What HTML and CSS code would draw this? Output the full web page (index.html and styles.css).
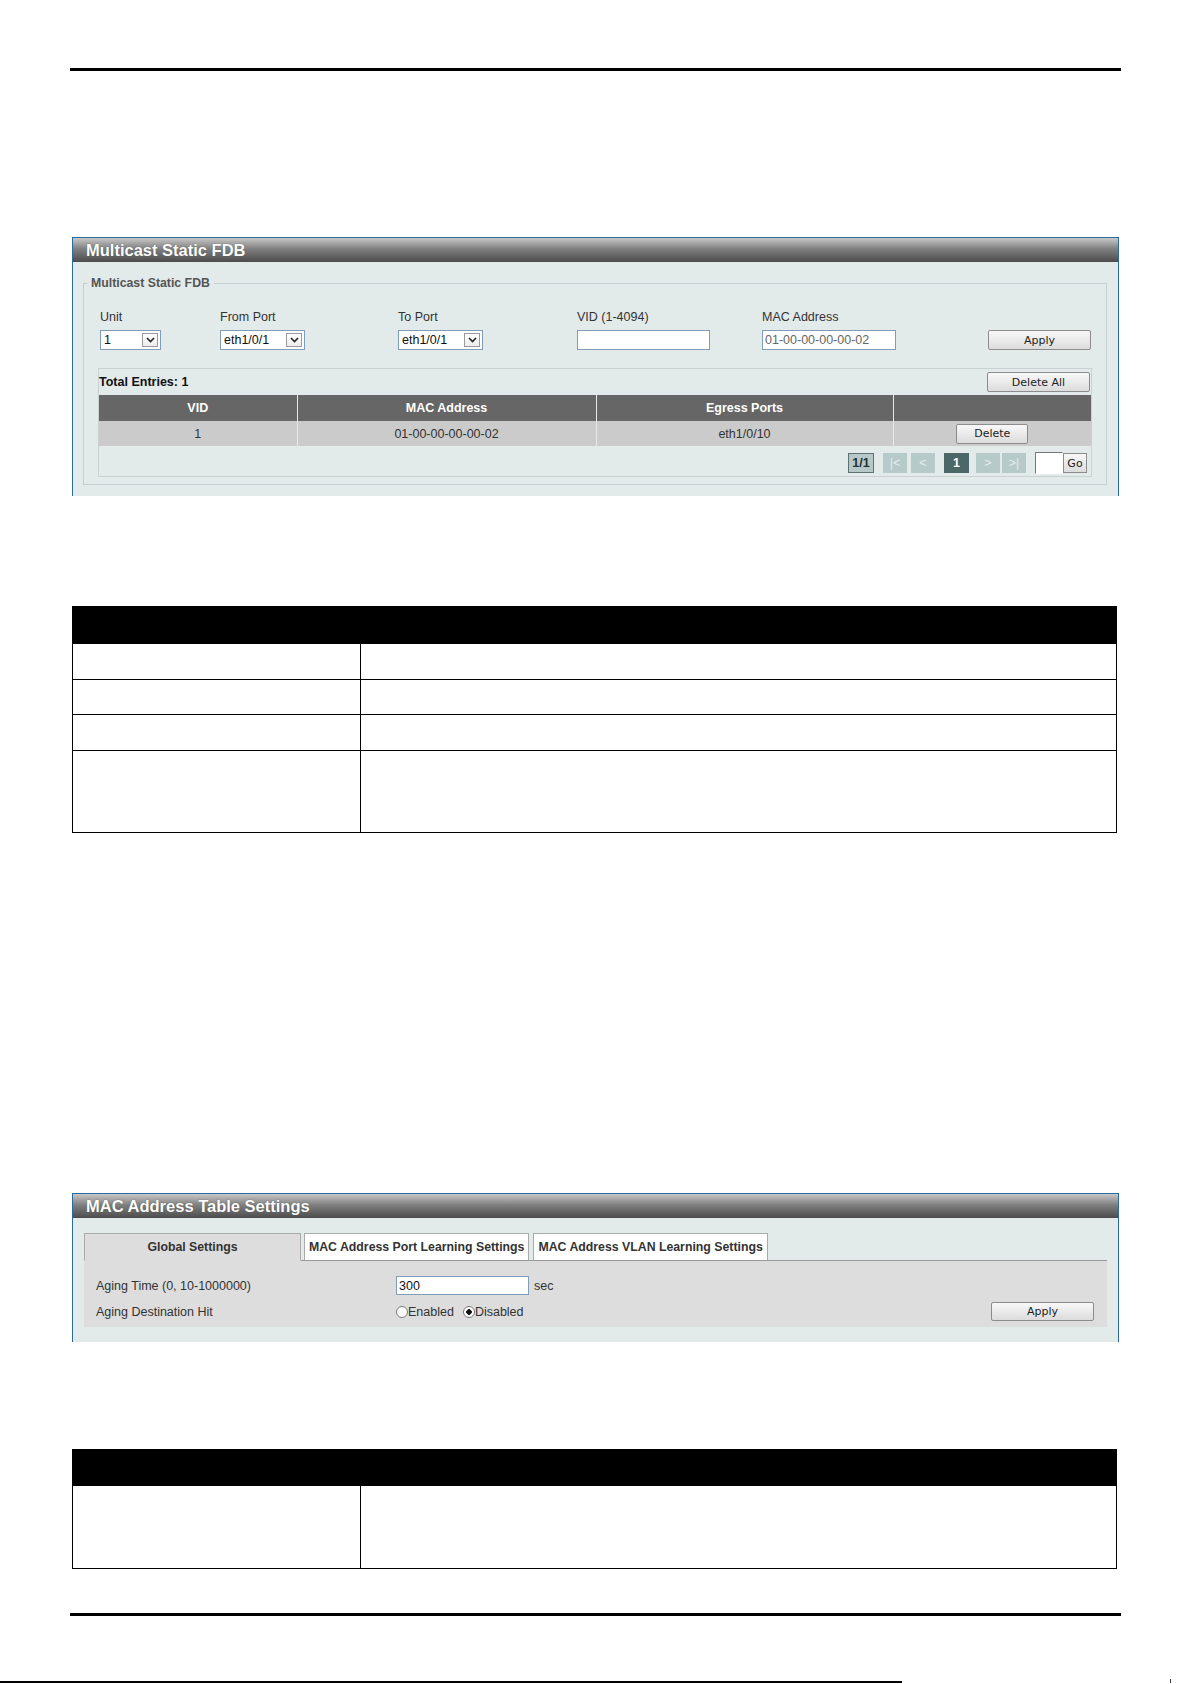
FILE: index.html
```html
<!DOCTYPE html>
<html lang="en">
<head>
    <meta charset="UTF-8">
    <meta name="viewport" content="width=device-width, initial-scale=1.0">
    <title>Multicast Static FDB</title>
    <link rel="stylesheet" href="styles.css">
</head>
<body>
    <div class="page">
        <div class="rule"></div>

        <div class="panel panel-fdb">
            <div class="panel-title">Multicast Static FDB</div>
            <fieldset class="group">
                <legend>Multicast Static FDB</legend>
                <div class="fields">
                    <label>Unit</label>
                    <label>From Port</label>
                    <label>To Port</label>
                    <label>VID (1-4094)</label>
                    <label>MAC Address</label>
                    <span></span>

                    <div class="select w-unit">
                        <span>1</span>
                        <span class="arrow"><svg width="9" height="6" viewBox="0 0 9 6"><path d="M1 1l3.5 3.5L8 1" fill="none" stroke="#222" stroke-width="1.6"/></svg></span>
                    </div>
                    <div class="select w-port">
                        <span>eth1/0/1</span>
                        <span class="arrow"><svg width="9" height="6" viewBox="0 0 9 6"><path d="M1 1l3.5 3.5L8 1" fill="none" stroke="#222" stroke-width="1.6"/></svg></span>
                    </div>
                    <div class="select w-port">
                        <span>eth1/0/1</span>
                        <span class="arrow"><svg width="9" height="6" viewBox="0 0 9 6"><path d="M1 1l3.5 3.5L8 1" fill="none" stroke="#222" stroke-width="1.6"/></svg></span>
                    </div>
                    <input type="text" class="text w-vid" value="">
                    <input type="text" class="text w-mac hint" value="01-00-00-00-00-02">
                    <button class="btn apply">Apply</button>
                </div>

                <div class="entries-box">
                    <div class="entries-top">
                        <span class="total">Total Entries: 1</span>
                        <button class="btn delete-all">Delete All</button>
                    </div>
                    <table class="entries">
                        <tr>
                            <th class="c1">VID</th>
                            <th class="c2">MAC Address</th>
                            <th class="c3">Egress Ports</th>
                            <th class="c4"></th>
                        </tr>
                        <tr>
                            <td>1</td>
                            <td>01-00-00-00-00-02</td>
                            <td>eth1/0/10</td>
                            <td><button class="btn delete">Delete</button></td>
                        </tr>
                    </table>
                    <div class="pager">
                        <span class="pg count">1/1</span>
                        <span class="pg off sp9">|&lt;</span>
                        <span class="pg off sp4">&lt;</span>
                        <span class="pg cur sp9">1</span>
                        <span class="pg off sp7">&gt;</span>
                        <span class="pg off sp2">&gt;|</span>
                        <input type="text" class="pg-input sp9">
                        <button class="btn go">Go</button>
                    </div>
                </div>
            </fieldset>
        </div>

        <table class="doc doc-first">
            <tr><th></th><th></th></tr>
            <tr class="h36"><td class="key"></td><td></td></tr>
            <tr class="h35"><td class="key"></td><td></td></tr>
            <tr class="h36"><td class="key"></td><td></td></tr>
            <tr class="h82"><td class="key"></td><td></td></tr>
        </table>

        <div class="panel panel-mac">
            <div class="panel-title">MAC Address Table Settings</div>
            <div class="tabs">
                <div class="tab active">Global Settings</div>
                <div class="tab tab-port">MAC Address Port Learning Settings</div>
                <div class="tab tab-vlan">MAC Address VLAN Learning Settings</div>
            </div>
            <div class="tab-body">
                <div class="row">
                    <span class="row-label">Aging Time (0, 10-1000000)</span>
                    <input type="text" class="text w-aging" value="300">
                    <span class="unit">sec</span>
                </div>
                <div class="row">
                    <span class="row-label">Aging Destination Hit</span>
                    <span class="radio"></span><span>Enabled</span>
                    <span class="radio checked"></span><span>Disabled</span>
                    <button class="btn apply apply-mac">Apply</button>
                </div>
            </div>
        </div>

        <table class="doc doc-second">
            <tr><th class="short"></th><th class="short"></th></tr>
            <tr class="h83"><td class="key"></td><td></td></tr>
        </table>

        <div class="rule rule-bottom"></div>

        <div class="foot">
            <div class="foot-line"></div>
            <div class="foot-mark"></div>
        </div>
    </div>
</body>
</html>
```

FILE: styles.css
```css
* {
    box-sizing: border-box;
}
body {
    margin: 0;
    background: #fff;
    font-family: "Liberation Sans", Arial, sans-serif;
    font-size: 12.5px;
    color: #333;
}
.page {
    width: 1192px;
    padding-top: 68px;
}
.rule {
    margin-left: 70px;
    width: 1051px;
    height: 3px;
    background: #000;
}

/* switch web UI panels */
.panel {
    margin-left: 72px;
    width: 1047px;
    border: 1px solid #2b6a9c;
    border-bottom: none;
    background: #e3eaea;
    overflow: hidden;
}
.panel-fdb {
    margin-top: 166px;
    height: 259px;
}
.panel-mac {
    margin-top: 360px;
    height: 149px;
}
.panel-title {
    height: 24px;
    line-height: 24px;
    padding-left: 13px;
    background: linear-gradient(#c8c8c8, #808080 45%, #4c4c4c);
    color: #fff;
    font-size: 16.5px;
    font-weight: bold;
    text-shadow: 0 0 1px #444;
}

.group {
    margin: 14px 11px 0 10px;
    padding: 0 15px 7px 16px;
    border: 1px solid #c6cfcf;
    min-width: 0;
}
.group legend {
    margin-left: -13px;
    padding: 0 4px;
    line-height: 14px;
    font-size: 12.3px;
    font-weight: bold;
    color: #555;
}
.fields {
    display: grid;
    grid-template-columns: 120px 178px 179px 185px 1fr auto;
    grid-template-rows: 15px 20px;
    row-gap: 5px;
    margin-top: 20px;
    align-items: center;
}
.fields label {
    line-height: 15px;
}

.select {
    display: flex;
    align-items: center;
    justify-content: space-between;
    height: 20px;
    padding-left: 3px;
    border: 1px solid #7f9db9;
    background: #fff;
    color: #111;
}
.w-unit {
    width: 61px;
}
.w-port {
    width: 85px;
}
.arrow {
    display: flex;
    align-items: center;
    justify-content: center;
    width: 16px;
    height: 14px;
    margin-right: 2px;
    border: 1px solid #9a9a9a;
    background: linear-gradient(#fff, #ececec);
}

.text {
    height: 20px;
    padding: 0 2px;
    border: 1px solid #7f9db9;
    background: #fff;
    font-family: "Liberation Sans", Arial, sans-serif;
    font-size: 12.5px;
    color: #111;
    outline: none;
}
.w-vid {
    width: 133px;
}
.w-mac {
    width: 134px;
}
.hint {
    color: #666;
}

.btn {
    height: 20px;
    padding: 0;
    border: 1px solid #8c8c8c;
    border-radius: 2px;
    background: linear-gradient(#f8f8f8, #dcdcdc);
    font-family: "DejaVu Sans", Verdana, sans-serif;
    font-size: 11px;
    color: #222;
}
.apply {
    width: 103px;
}

/* entries list */
.entries-box {
    margin: 18px -1px 0 -2px;
    border: 1px solid #c9d1d1;
}
.entries-top {
    display: flex;
    align-items: center;
    justify-content: space-between;
    height: 26px;
    padding-right: 1px;
}
.total {
    font-weight: bold;
    color: #111;
}
.delete-all {
    width: 103px;
}
.entries {
    width: 100%;
    border-collapse: collapse;
    text-align: center;
}
.entries th {
    height: 26px;
    padding: 0;
    background: #666;
    color: #fff;
    font-weight: bold;
}
.entries td {
    height: 25px;
    padding: 0;
    background: #cbcbcb;
    color: #333;
}
.entries th + th,
.entries td + td {
    border-left: 1px solid #e8e8e8;
}
.entries .c1 { width: 198px; }
.entries .c2 { width: 299px; }
.entries .c3 { width: 297px; }
.entries .c4 { width: 198px; }
.delete {
    width: 72px;
    vertical-align: middle;
}

.pager {
    display: flex;
    align-items: center;
    justify-content: flex-end;
    height: 30px;
    padding: 4px 4px 0 0;
}
.pg {
    display: flex;
    align-items: center;
    justify-content: center;
    width: 24px;
    height: 20px;
    font-weight: bold;
}
.count {
    width: 26px;
    border: 1px solid #5f7272;
    background: #b7c8c8;
    color: #223333;
}
.off {
    background: #b6caca;
    color: #e4eded;
    font-weight: normal;
}
.cur {
    width: 25px;
    background: #4b6767;
    color: #fff;
}
.sp2 { margin-left: 2px; }
.sp4 { margin-left: 4px; }
.sp7 { margin-left: 7px; }
.sp9 { margin-left: 9px; }
.pg-input {
    width: 28px;
    height: 22px;
    border: 1px solid #fff;
    border-top-color: #777;
    border-left-color: #777;
    background: #fff;
    outline: none;
}
.go {
    width: 24px;
    height: 20px;
    border-radius: 0;
}

/* tabbed settings */
.tabs {
    display: flex;
    height: 28px;
    margin: 15px 11px 0 11px;
    border-bottom: 1px solid #999;
}
.tab {
    height: 28px;
    margin-bottom: -1px;
    padding: 0 4px;
    border: 1px solid #aaa;
    border-bottom-color: #999;
    background: #fff;
    line-height: 26px;
    font-size: 12.3px;
    font-weight: bold;
    color: #333;
    text-align: center;
}
.tab.active {
    width: 217px;
    background: #ddd;
    border-bottom-color: #ddd;
}
.tab-port {
    margin-left: 3px;
}
.tab-vlan {
    margin-left: 4px;
}
.tab-body {
    margin: 0 11px;
    padding: 15px 13px 6px 12px;
    background: #ddd;
}
.row {
    display: flex;
    align-items: center;
    height: 19px;
}
.row + .row {
    margin-top: 7px;
}
.row-label {
    width: 300px;
}
.w-aging {
    width: 133px;
    height: 19px;
}
.unit {
    margin-left: 5px;
}
.radio {
    width: 12px;
    height: 12px;
    border: 1px solid #777;
    border-radius: 50%;
    background: #fff;
}
.radio.checked {
    margin-left: 9px;
    background: radial-gradient(circle, #111 0 2.5px, #fff 3px);
}
.apply-mac {
    width: 103px;
    height: 19px;
    margin-left: auto;
}

/* description tables */
.doc {
    margin-left: 72px;
    width: 1045px;
    border-collapse: collapse;
    border: 1px solid #000;
}
.doc th {
    height: 37px;
    padding: 0;
    background: #000;
}
.doc th.short {
    height: 36px;
}
.doc td {
    padding: 0;
    border: 1px solid #000;
}
.doc .key {
    width: 288px;
}
.doc .h35 td {
    height: 35px;
}
.doc .h36 td {
    height: 36px;
}
.doc .h82 td {
    height: 82px;
}
.doc .h83 td {
    height: 83px;
}
.doc-first {
    margin-top: 110px;
}
.doc-second {
    margin-top: 107px;
}

.rule-bottom {
    margin-top: 44px;
}
.foot {
    display: flex;
    align-items: flex-end;
    height: 4px;
    margin-top: 63px;
}
.foot-line {
    width: 902px;
    height: 2px;
    background: #000;
}
.foot-mark {
    width: 1px;
    height: 4px;
    margin-left: 268px;
    background: #444;
}
```
